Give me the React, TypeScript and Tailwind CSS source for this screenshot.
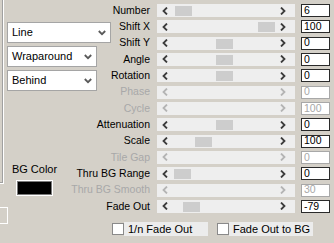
import { Fragment } from "react";

const rows = [
  { label: "Number", value: "6", thumb: 18 },
  { label: "Shift X", value: "100", thumb: 101 },
  { label: "Shift Y", value: "0", thumb: 59 },
  { label: "Angle", value: "0", thumb: 59 },
  { label: "Rotation", value: "0", thumb: 59 },
  { label: "Phase", value: "0", disabled: true },
  { label: "Cycle", value: "100", disabled: true },
  { label: "Attenuation", value: "0", thumb: 59 },
  { label: "Scale", value: "100", thumb: 38 },
  { label: "Tile Gap", value: "0", disabled: true },
  { label: "Thru BG Range", value: "0", thumb: 17 },
  { label: "Thru BG Smooth", value: "30", disabled: true },
  { label: "Fade Out", value: "-79", thumb: 26 },
];

const Arrow = ({ dir, disabled }: { dir: "l" | "r"; disabled?: boolean }) => (
  <svg width="6" height="8" viewBox="0 0 6 8">
    <polyline
      points={dir === "l" ? "5,0.5 1.5,4 5,7.5" : "1,0.5 4.5,4 1,7.5"}
      fill="none"
      stroke={disabled ? "#b4b4b4" : "#3c3c3c"}
      strokeWidth="1.8"
    />
  </svg>
);

const Chevron = () => (
  <svg width="8" height="6" viewBox="0 0 8 6">
    <polyline points="0.8,1 4,4.2 7.2,1" fill="none" stroke="#5a5a5a" strokeWidth="1.8" />
  </svg>
);

const Select = ({ text, w }: { text: string; w: string }) => (
  <div className={`${w} h-[21px] flex items-center justify-between border border-[#a5a5a5] bg-white pl-[4px] pr-[4px] text-[11px] text-black`}>
    <span>{text}</span>
    <Chevron />
  </div>
);

const Check = ({ text }: { text: string }) => (
  <div className="flex items-center">
    <div className="w-[12px] h-[12px] border border-[#8a8a8a] bg-white" />
    <div className="w-[84px] h-[14px] bg-[#ececec] pl-[4px] text-[11px] leading-[14px] text-black">{text}</div>
  </div>
);

export default function App() {
  return (
    <div
      className="relative w-[334px] h-[243px] overflow-hidden bg-[#d4d0c8]"
      style={{ fontFamily: '"Liberation Sans", Arial, sans-serif' }}
    >
      {/* edges of the neighbouring panel */}
      <div className="absolute left-0 top-0 w-[4px] h-[184px] border-r border-b border-r-[#ffffff] border-b-[#ffffff] shadow-[inset_-1px_-1px_0_#a0a0a0]" />
      <div className="absolute left-0 top-[207px] w-[8px] h-[17px] border-t border-r border-b border-[#ffffff]" />

      <div className="grid grid-cols-[151px_138px_29px] grid-rows-[repeat(13,13px)] gap-x-[6px] gap-y-[3.33px] pt-[4px]">
        <div className="col-start-1 row-start-1 row-span-13 flex flex-col pl-[7px] pt-[18px]">
          <Select text="Line" w="w-[104px]" />
          <div className="mt-[3px]">
            <Select text="Wraparound" w="w-[90px]" />
          </div>
          <div className="mt-[3px]">
            <Select text="Behind" w="w-[90px]" />
          </div>
          <div className="mt-[72px] w-[55px] flex flex-col items-center">
            <span className="text-[11px] leading-[13px] text-black">BG Color</span>
            <div className="mt-[4px] w-[37px] h-[16px] border border-white">
              <div className="w-full h-full border border-[#7a7a7a] bg-black" />
            </div>
          </div>
        </div>

        {rows.map((r, i) => (
          <Fragment key={r.label}>
            <div
              className={`col-start-1 flex items-center justify-end pr-[1px] text-[10.5px] whitespace-nowrap ${r.disabled ? "text-[#a8a8a8]" : "text-black"}`}
              style={{ gridRow: i + 1 }}
            >
              {r.label}
            </div>
            <div
              className="col-start-2 relative flex items-center justify-between bg-[#eeeeee] pl-[5px] pr-[9px]"
              style={{ gridRow: i + 1 }}
            >
              <Arrow dir="l" disabled={r.disabled} />
              {r.thumb !== undefined && (
                <div className="absolute top-[2px] h-[10px] w-[17px] bg-[#cdcdcd]" style={{ left: r.thumb }} />
              )}
              <Arrow dir="r" disabled={r.disabled} />
            </div>
            <div
              className={`col-start-3 flex items-center bg-white border pl-[2px] text-[10.5px] ${r.disabled ? "border-[#a8a8a8] text-[#a8a8a8]" : "border-[#2a2a2a] text-black"}`}
              style={{ gridRow: i + 1 }}
            >
              {r.value}
            </div>
          </Fragment>
        ))}
      </div>

      <div className="flex gap-[9px] pl-[112px] mt-[9px]">
        <Check text="1/n Fade Out" />
        <Check text="Fade Out to BG" />
      </div>
    </div>
  );
}
